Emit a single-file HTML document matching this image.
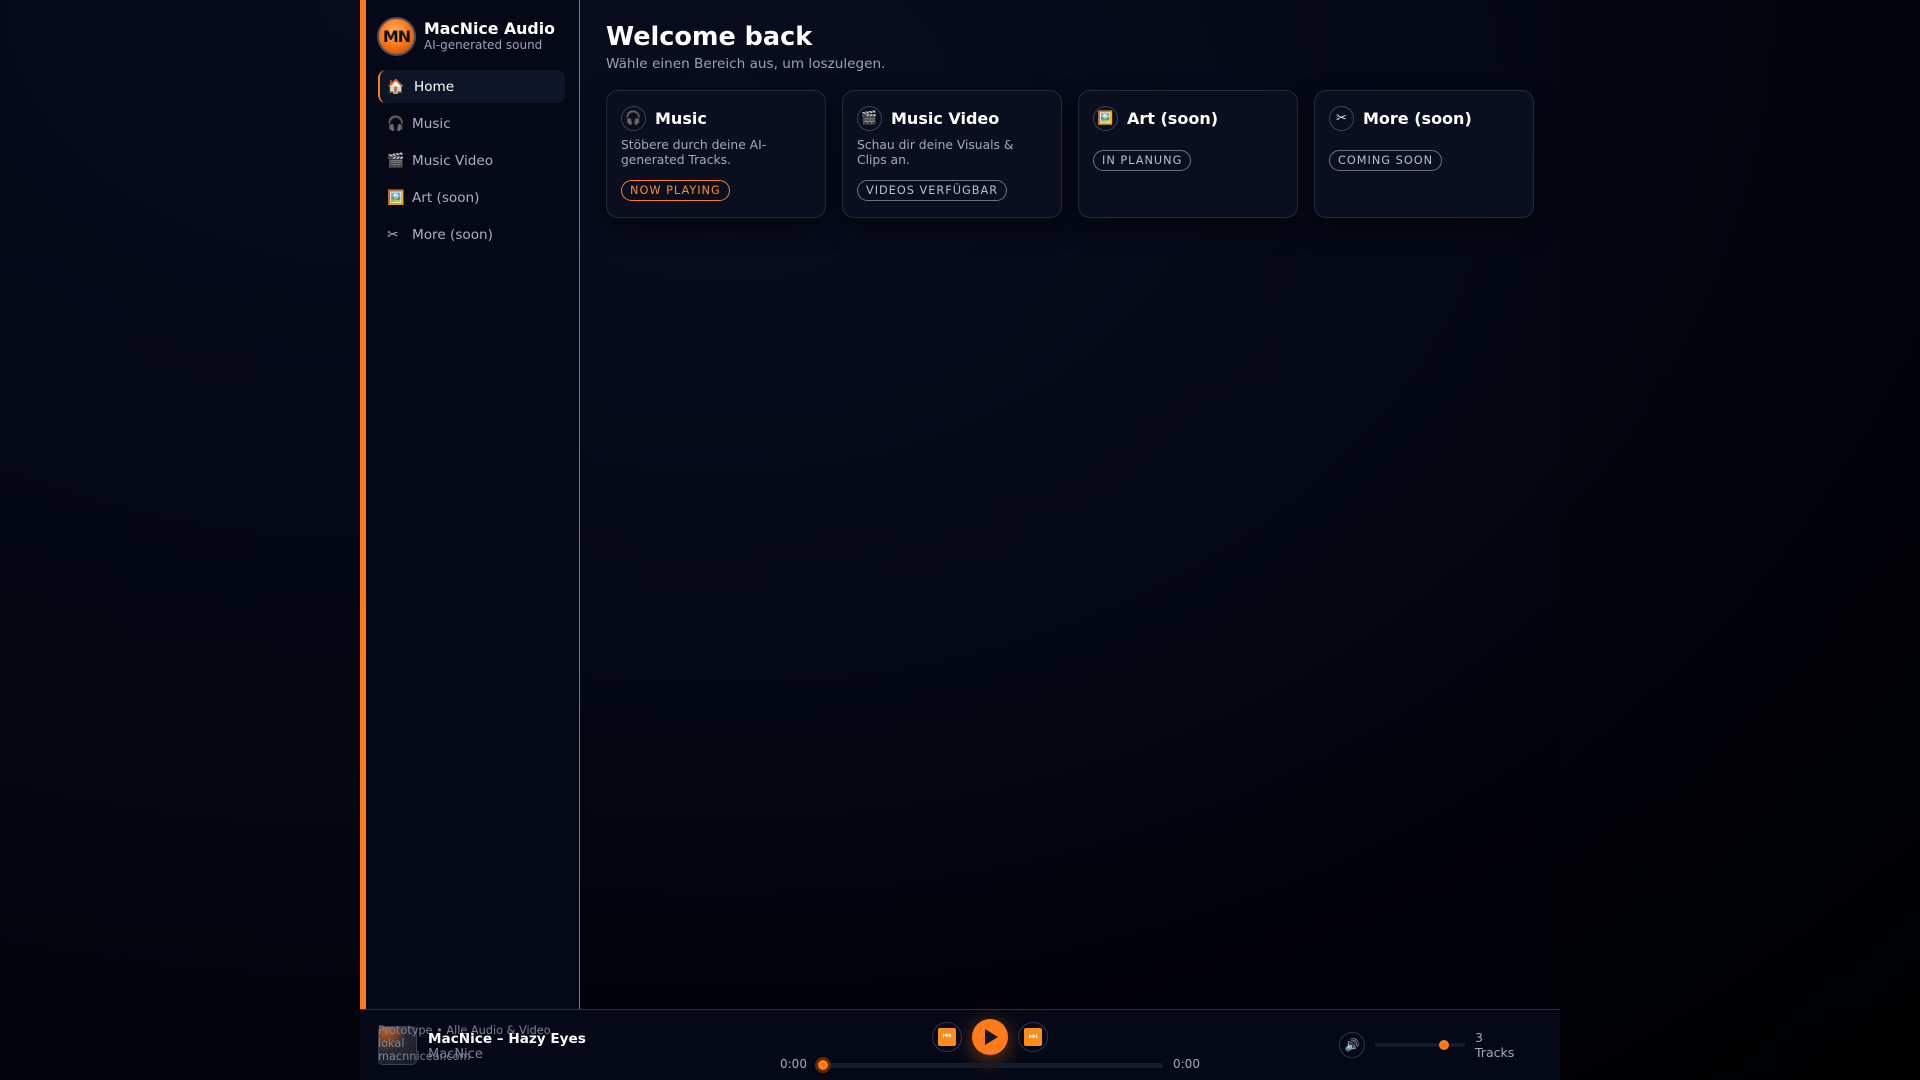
<!DOCTYPE html>
<html><head><meta charset="utf-8"><style>
*{box-sizing:border-box;margin:0;padding:0}
html,body{width:1920px;height:1080px;overflow:hidden}
body{background:radial-gradient(ellipse at 20% 0%,#070b1e 0%,#03050e 60%,#000 100%);font-family:"DejaVu Sans","Liberation Sans",sans-serif;color:#e6e9f2;position:relative}
.app{position:absolute;left:360px;top:0;width:1200px;height:1080px;background:radial-gradient(ellipse 110% 90% at 30% 10%,#080c1e 0%,#050816 55%,#010207 100%)}
.strip{position:absolute;left:0;top:0;width:6px;height:1009px;background:#ff7a1a}
.side{position:absolute;left:6px;top:0;width:214px;height:1009px;background:#050816;border-right:1px solid #c0621c}
.logo{position:absolute;left:11px;top:17px;width:39px;height:39px;border-radius:50%;border:2px solid #4a5060;background:radial-gradient(circle at 45% 35%,#ffb060 0%,#ff7a1a 45%,#b04400 100%);color:#111;font-weight:bold;font-size:16px;line-height:35px;text-align:center;letter-spacing:-1px}
.brand{position:absolute;left:58px;top:19px;font-weight:bold;font-size:15.8px;color:#fff}
.sub{position:absolute;left:58px;top:38px;font-size:12px;color:#9aa1b3}
.nav{position:absolute;left:12px;width:187px;height:33px;border-radius:8px;font-size:13.6px;color:#aab0c0;line-height:35px;padding-left:34px}
.nav .ic{position:absolute;left:9px;top:0;font-size:14px}
.nav.act{background:#0f1528;color:#fff;border-left:2px solid #ff7a1a}
.nav.act .ic{left:7px}
h1{position:absolute;left:246px;top:22px;font-size:25.5px;font-weight:bold;color:#fff}
.lead{position:absolute;left:246px;top:56px;font-size:13.6px;color:#9aa1b3}
.card{position:absolute;top:90px;width:220px;height:128px;border:1px solid #232a3c;border-radius:12px;background:#0a0f20;box-shadow:0 10px 24px rgba(0,0,0,.5)}
.card .ci{position:absolute;left:14px;top:15px;width:25px;height:25px;border-radius:50%;border:1px solid #3a4152;text-align:center;line-height:23px;font-size:13px}
.card .t{position:absolute;left:48px;top:18px;font-weight:bold;font-size:16px;color:#fff}
.card .d{position:absolute;left:14px;top:47px;width:178px;font-size:12.3px;line-height:15px;color:#a3a9b8}
.badge{position:absolute;left:14px;height:21px;border:1px solid #6b7180;border-radius:11px;padding:0 8px;font-size:11.3px;letter-spacing:1px;line-height:19px;color:#b9bfcc}
.badge.o{border-color:#ff7a1a;color:#ff8a2a}
.player{position:absolute;left:0;top:1009px;width:1200px;height:71px;background:#050816;border-top:1px solid #2a3040}
.thumb{position:absolute;left:18px;top:16px;width:39px;height:39px;border:1px solid #3a4152;border-radius:5px;background:radial-gradient(circle at 20% 10%,#c0621c 0%,#2a2a35 45%,#141824 100%)}
.cb{position:absolute;border-radius:50%;border:1px solid #2e3548}
.sq{position:absolute;width:18px;height:18px;background:#ff8c1a;border-radius:2px;color:#fff;font-size:10px;line-height:18px;text-align:center}
</style></head><body>
<div class="app">
<div class="strip"></div>
<div class="side">
 <div class="logo">MN</div>
 <div class="brand">MacNice Audio</div>
 <div class="sub">AI-generated sound</div>
 <div class="nav act" style="top:70px"><span class="ic">🏠</span>Home</div>
 <div class="nav" style="top:107px"><span class="ic">🎧</span>Music</div>
 <div class="nav" style="top:144px"><span class="ic">🎬</span>Music Video</div>
 <div class="nav" style="top:181px"><span class="ic">🖼️</span>Art (soon)</div>
 <div class="nav" style="top:218px"><span class="ic">✂</span>More (soon)</div>
</div>
<h1>Welcome back</h1>
<div class="lead">Wähle einen Bereich aus, um loszulegen.</div>
<div class="card" style="left:246px"><div class="ci">🎧</div><div class="t">Music</div><div class="d">Stöbere durch deine AI-generated Tracks.</div><div class="badge o" style="top:89px">NOW PLAYING</div></div>
<div class="card" style="left:482px"><div class="ci">🎬</div><div class="t">Music Video</div><div class="d">Schau dir deine Visuals &amp; Clips an.</div><div class="badge" style="top:89px">VIDEOS VERFÜGBAR</div></div>
<div class="card" style="left:718px"><div class="ci">🖼️</div><div class="t">Art (soon)</div><div class="badge" style="top:59px">IN PLANUNG</div></div>
<div class="card" style="left:954px"><div class="ci">✂</div><div class="t">More (soon)</div><div class="badge" style="top:59px">COMING SOON</div></div>
<div class="player">
 <div class="thumb"></div>
 <div style="position:absolute;left:18px;top:14px;font-size:11.3px;line-height:13px;color:#7b8294">Prototype • Alle Audio &amp; Video<br>lokal<br>macnniceai.com</div>
 <div style="position:absolute;left:68px;top:21px;font-size:13.6px;font-weight:bold;color:#fff">MacNice – Hazy Eyes</div>
 <div style="position:absolute;left:68px;top:37px;font-size:13px;color:#7b8294">MacNice</div>
 <div class="cb" style="left:572px;top:12px;width:30px;height:30px"><div class="sq" style="left:5px;top:5px">⏮</div></div>
 <div style="position:absolute;left:612px;top:9px;width:36px;height:36px;border-radius:50%;background:#ff7a1a;box-shadow:0 4px 20px rgba(255,122,26,.45)"><div style="position:absolute;left:13px;top:10px;width:0;height:0;border-left:13px solid #121826;border-top:8px solid transparent;border-bottom:8px solid transparent"></div></div>
 <div class="cb" style="left:658px;top:12px;width:30px;height:30px"><div class="sq" style="left:5px;top:5px">⏭</div></div>
 <div style="position:absolute;left:420px;top:47px;font-size:12px;color:#a3a9b8">0:00</div>
 <div style="position:absolute;left:462px;top:53px;width:341px;height:5px;border-radius:3px;background:#161c2c"></div>
 <div style="position:absolute;left:455px;top:47px;width:16px;height:16px;border-radius:50%;background:#5a2a08"><div style="position:absolute;left:3px;top:3px;width:10px;height:10px;border-radius:50%;background:#ff7a1a"></div></div>
 <div style="position:absolute;left:813px;top:47px;font-size:12px;color:#a3a9b8">0:00</div>
 <div class="cb" style="left:979px;top:22px;width:26px;height:26px;font-size:12px;text-align:center;line-height:24px">🔊</div>
 <div style="position:absolute;left:1015px;top:33px;width:90px;height:4px;border-radius:2px;background:#161c2c"></div>
 <div style="position:absolute;left:1079px;top:30px;width:10px;height:10px;border-radius:50%;background:#ff7a1a"></div>
 <div style="position:absolute;left:1115px;top:20px;font-size:12.5px;line-height:15px;color:#a3a9b8">3<br>Tracks</div>
</div>
</div>
</body></html>
